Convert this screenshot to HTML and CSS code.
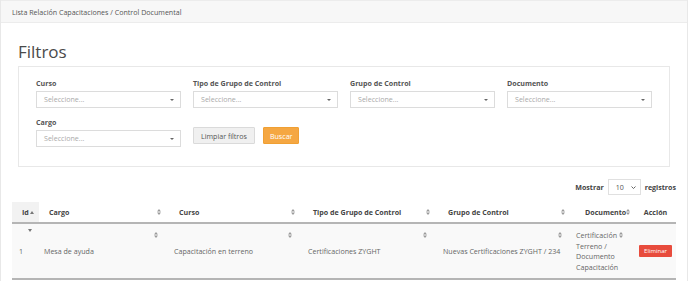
FILE: index.html
```html
<!DOCTYPE html>
<html lang="es">

<head>
    <meta charset="UTF-8">
    <meta name="viewport" content="width=device-width, initial-scale=1.0">
    <title>Control Documental</title>
    <link rel="stylesheet" href="styles.css">
</head>

<body>
    <div class="page">
        <div class="breadcrumb">Lista Relación Capacitaciones / Control Documental</div>

        <div class="content">
            <h3 class="title">Filtros</h3>

            <div class="filters">
                <div class="field">
                    <label>Curso</label>
                    <div class="select">Seleccione...</div>
                </div>
                <div class="field">
                    <label>Tipo de Grupo de Control</label>
                    <div class="select">Seleccione...</div>
                </div>
                <div class="field">
                    <label>Grupo de Control</label>
                    <div class="select">Seleccione...</div>
                </div>
                <div class="field">
                    <label>Documento</label>
                    <div class="select">Seleccione...</div>
                </div>
                <div class="field">
                    <label>Cargo</label>
                    <div class="select">Seleccione...</div>
                </div>
                <div class="actions">
                    <button class="btn btn-light">Limpiar filtros</button>
                    <button class="btn btn-warning">Buscar</button>
                </div>
            </div>

            <div class="length">
                <span>Mostrar</span>
                <div class="length-select">10 <svg width="5" height="3" viewBox="0 0 5 3"><path d="M0.5 0.5L2.5 2.5L4.5 0.5" fill="none" stroke="#555" stroke-width="0.9"/></svg></div>
                <span>registros</span>
            </div>

            <table class="grid">
                <colgroup>
                    <col style="width: 27px">
                    <col style="width: 130px">
                    <col style="width: 134px">
                    <col style="width: 135px">
                    <col style="width: 135px">
                    <col style="width: 62px">
                    <col style="width: 41px">
                </colgroup>
                <thead>
                    <tr>
                        <th class="sorted">Id<svg class="asc" width="4" height="3" viewBox="0 0 4 3"><path d="M2 0L4 3H0Z" fill="#777"/></svg></th>
                        <th class="sort">Cargo<svg class="both" width="4" height="6" viewBox="0 0 4 6"><path d="M2 0L4 2.4H0Z M2 6L0 3.6H4Z" fill="#999"/></svg></th>
                        <th class="sort">Curso<svg class="both" width="4" height="6" viewBox="0 0 4 6"><path d="M2 0L4 2.4H0Z M2 6L0 3.6H4Z" fill="#999"/></svg></th>
                        <th class="sort">Tipo de Grupo de Control<svg class="both" width="4" height="6" viewBox="0 0 4 6"><path d="M2 0L4 2.4H0Z M2 6L0 3.6H4Z" fill="#999"/></svg></th>
                        <th class="sort">Grupo de Control<svg class="both" width="4" height="6" viewBox="0 0 4 6"><path d="M2 0L4 2.4H0Z M2 6L0 3.6H4Z" fill="#999"/></svg></th>
                        <th class="doc">Documento<svg width="4" height="6" viewBox="0 0 4 6"><path d="M2 0L4 2.4H0Z M2 6L0 3.6H4Z" fill="#999"/></svg></th>
                        <th class="center">Acción</th>
                    </tr>
                </thead>
                <tbody>
                    <tr>
                        <td class="id-cell"><svg class="desc" width="4" height="3" viewBox="0 0 4 3"><path d="M0 0H4L2 3Z" fill="#777"/></svg>1</td>
                        <td class="sort">Mesa de ayuda<svg class="both" width="4" height="6" viewBox="0 0 4 6"><path d="M2 0L4 2.4H0Z M2 6L0 3.6H4Z" fill="#999"/></svg></td>
                        <td class="sort">Capacitación en terreno<svg class="both" width="4" height="6" viewBox="0 0 4 6"><path d="M2 0L4 2.4H0Z M2 6L0 3.6H4Z" fill="#999"/></svg></td>
                        <td class="sort">Certificaciones ZYGHT<svg class="both" width="4" height="6" viewBox="0 0 4 6"><path d="M2 0L4 2.4H0Z M2 6L0 3.6H4Z" fill="#999"/></svg></td>
                        <td class="sort">Nuevas Certificaciones ZYGHT / 234<svg class="both" width="4" height="6" viewBox="0 0 4 6"><path d="M2 0L4 2.4H0Z M2 6L0 3.6H4Z" fill="#999"/></svg></td>
                        <td class="doc-cell">Certificación <svg width="4" height="6" viewBox="0 0 4 6"><path d="M2 0L4 2.4H0Z M2 6L0 3.6H4Z" fill="#999"/></svg> Terreno / Documento Capacitación</td>
                        <td class="center"><button class="btn-danger">Eliminar</button></td>
                    </tr>
                </tbody>
            </table>
        </div>
    </div>
</body>

</html>
```

FILE: styles.css
```css
body {
    margin: 0;
    background-color: white;
    font-family: "Open Sans", "Liberation Sans", sans-serif;
    font-size: 7.1px;
    color: #666;
}

.page {
    height: 281px;
    border-left: 1px solid #e8e8e8;
    border-right: 1px solid #e8e8e8;
    box-sizing: border-box;
}

.breadcrumb {
    height: 23px;
    line-height: 22px;
    padding-left: 11px;
    background-color: #f7f7f7;
    border-top: 1px solid #ececec;
    border-bottom: 1px solid #ececec;
    box-sizing: border-box;
    color: #555;
}

.content {
    padding: 0 11px 0 11px;
}

.title {
    margin: 19px 6px 4px 6px;
    font-size: 17px;
    line-height: 20px;
    font-weight: normal;
    color: #4a4a4a;
}

.filters {
    margin: 0 6px;
    padding: 11px 17px 19px 17px;
    border: 1px solid #e8e8e8;
    display: grid;
    grid-template-columns: repeat(4, 145px);
    column-gap: 12px;
    row-gap: 9px;
}

.field label {
    display: block;
    line-height: 10px;
    margin-bottom: 3px;
    font-weight: bold;
    color: #555;
}

.select {
    position: relative;
    height: 17px;
    line-height: 15px;
    padding-left: 7px;
    border: 1px solid #dcdcdc;
    box-sizing: border-box;
    color: #aaa;
}

.select:after {
    content: "";
    position: absolute;
    right: 6px;
    top: 7px;
    border-left: 2px solid transparent;
    border-right: 2px solid transparent;
    border-top: 2px solid #666;
}

.actions {
    display: flex;
    gap: 8px;
    align-items: flex-start;
    padding-top: 10px;
}

.btn {
    height: 17px;
    padding: 0 7px;
    font-family: inherit;
    font-size: 7.1px;
    border-radius: 1px;
    cursor: pointer;
}

.btn-light {
    background-color: #f0f0f0;
    border: 1px solid #dadada;
    color: #555;
}

.btn-warning {
    background-color: #f5a742;
    border: 1px solid #f0a033;
    color: white;
    padding: 0 6px;
}

.length {
    display: flex;
    justify-content: flex-end;
    align-items: center;
    gap: 4px;
    margin-top: 12px;
    font-weight: bold;
    color: #444;
}

.length-select {
    width: 33px;
    height: 16px;
    border: 1px solid #e0e0e0;
    box-sizing: border-box;
    display: flex;
    align-items: center;
    justify-content: space-between;
    padding: 0 4px 0 7px;
    font-weight: normal;
    color: #555;
}

.grid {
    margin-top: 7px;
    width: 664px;
    table-layout: fixed;
    border-collapse: collapse;
}

.grid th {
    position: relative;
    height: 20px;
    padding: 0 10px;
    text-align: left;
    font-weight: bold;
    color: #444;
    border-bottom: 2px solid #b5b5b5;
    white-space: nowrap;
}

.grid th.sorted {
    background-color: #f2f2f2;
}

.grid th svg.asc {
    margin-left: 1px;
    vertical-align: 1px;
}

.grid th svg.both {
    position: absolute;
    right: 8px;
    top: 7px;
}

.grid th.doc {
    padding: 0 8px 0 12px;
}

.grid th.center {
    text-align: center;
    padding: 0;
}

.grid tbody tr {
    background-color: #f9f9f9;
}

.grid td {
    position: relative;
    padding: 6px 5px;
    line-height: 10.5px;
    color: #666;
    border-bottom: 2px solid #b5b5b5;
    vertical-align: middle;
}

.grid td svg.both {
    position: absolute;
    right: 11px;
    top: 8px;
}

.grid td.id-cell {
    padding-left: 7px;
}

.grid td.id-cell svg.desc {
    position: absolute;
    left: 16px;
    top: 5px;
}

.grid td.doc-cell {
    padding: 6px 2px 6px 3px;
}

.grid td.center {
    text-align: center;
    padding: 0;
}

.btn-danger {
    height: 12px;
    padding: 0 5px;
    border: none;
    border-radius: 1px;
    background-color: #e84c3d;
    color: white;
    font-family: inherit;
    font-size: 6px;
}
```
